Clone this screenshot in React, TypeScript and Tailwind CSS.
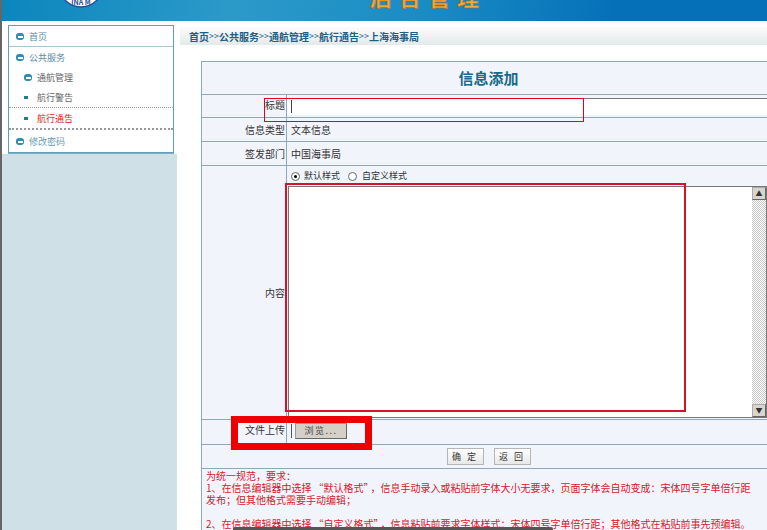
import React from 'react';

const cjk = "font-['Noto_Sans_CJK_SC',sans-serif]";

const NavDot = () => (
  <span className="flex h-[7px] w-[8px] shrink-0 items-center justify-center rounded-[3px] bg-[#2f8db5]">
    <span className="block h-[2px] w-[5px] bg-white" />
  </span>
);

const Bullet = () => <span className="mr-[9px] h-[3px] w-[4px] bg-[#1f7f86]" />;

const Sidebar = () => (
  <aside className="flex w-[175px] shrink-0 flex-col">
    <div className="bg-white pb-[1px] pl-[6px] pr-[3px] pt-[4px]">
      <div className="border border-[#5f9db8] bg-white text-[9px] leading-none shadow-[0_1px_0_#7fb0c6]">
        <div className="flex h-[21px] items-center gap-[5px] border-b border-[#a9c4d2] pl-[7px] pt-[1px] text-[#5a8aa5]">
          <NavDot /> 首页
        </div>
        <div className="flex h-[20px] items-center gap-[5px] pl-[7px] pt-[1px] text-[#5a8aa5]">
          <NavDot /> 公共服务
        </div>
        <div className="flex h-[20px] items-center gap-[5px] pl-[15px] pt-[1px] text-[#666]">
          <NavDot /> 通航管理
        </div>
        <div className="flex h-[21px] items-center border-b border-dotted border-[#999] pl-[15px] pt-[1px] text-[#666]">
          <Bullet /> 航行警告
        </div>
        <div className="flex h-[22px] items-center border-b-2 border-dotted border-[#999] pl-[15px] pt-[1px] text-[#e01b1b]">
          <Bullet /> 航行通告
        </div>
        <div className="flex h-[22px] items-center gap-[5px] pl-[7px] pt-[1px] text-[#6a9ab3]">
          <NavDot /> 修改密码
        </div>
      </div>
    </div>
    <div className="flex-1 bg-[#cfe0e7]" />
  </aside>
);

const Row = ({ label, h, top, children }: { label: string; h: string; top?: boolean; children?: React.ReactNode }) => (
  <div className={`flex border-b border-[#8fa8bb] ${h}`}>
    <div className={`flex w-[85px] shrink-0 justify-end border-r border-[#8fa8bb] pr-[1px] text-[#333] ${top ? 'items-start pt-[2px]' : 'items-center'}`}>
      {label}
    </div>
    <div className="flex min-w-0 flex-1 items-center pl-[4px] text-[#333]">{children}</div>
  </div>
);

const Radio = ({ checked }: { checked?: boolean }) => (
  <span className="flex h-[9px] w-[9px] shrink-0 items-center justify-center rounded-full border border-[#666] bg-white">
    {checked && <span className="h-[3px] w-[3px] rounded-full bg-black" />}
  </span>
);

const Quote = ({ children }: { children: React.ReactNode }) => <span className="px-[2px]">{children}</span>;

const Sep = () => <span className="text-[9px] font-normal">&gt;&gt;</span>;

export default function App() {
  return (
    <div className={`relative flex h-[530px] w-[767px] overflow-hidden bg-white text-[10px] ${cjk}`}>
      <div className="w-[2px] shrink-0 bg-[#666]" />
      <div className="flex min-w-0 flex-1 flex-col">
        <header className="relative h-[21px] shrink-0 overflow-hidden bg-[linear-gradient(100deg,#0b86bd_0%,#2c9ac9_30%,#1a8cc4_55%,#0570b8_80%,#0570b8_100%)] pl-[368px]">
          <svg className="absolute left-[56px] top-[-38px] h-[46px] w-[46px]" viewBox="0 0 46 46">
            <circle cx="23" cy="23" r="22" fill="#fff" stroke="#2a4f9c" strokeWidth="1.5" />
            <text x="23" y="43" textAnchor="middle" fontSize="7" fontWeight="700" fill="#2a4f9c">INA M</text>
          </svg>
          <span className="mt-[-19px] block text-[22px] font-bold leading-[30px] tracking-[7px] text-[#f2a93b] [-webkit-text-stroke:0.5px_#a8621a]">后台管理</span>
        </header>
        <div className="flex min-h-0 flex-1">
          <Sidebar />
          <main className="min-w-0 flex-1 pt-[6px]">
            <div className="ml-[3px] flex h-[18px] items-center bg-[linear-gradient(#fbfbfa,#e3eaea)] pl-[9px] text-[10px] font-bold text-[#1d5f86]">
              首页<Sep />公共服务<Sep />通航管理<Sep />航行通告<Sep />上海海事局
            </div>
            <div className="ml-[24px] mt-[16px] w-[574px] border-l border-t border-[#8fa8bb] bg-[#f2f4fc]">
              <div className="flex h-[33px] items-center justify-center border-b border-[#8fa8bb] text-[15px] font-bold text-[#176b8a]">信息添加</div>
              <Row label="标题" h="h-[23px]" top>
                <div className="ml-[-4px] mt-[3px] h-[17px] w-[calc(100%+4px)] self-start border-t border-[#777] bg-white pl-[4px] pt-[1px]">
                  <div className="h-[13px] w-px bg-[#444]" />
                </div>
              </Row>
              <Row label="信息类型" h="h-[24px]">文本信息</Row>
              <Row label="签发部门" h="h-[24px]">中国海事局</Row>
              <Row label="内容" h="h-[254px]">
                <div className="flex h-full w-full flex-col">
                  <div className="flex h-[20px] items-center text-[9px]">
                    <Radio checked />
                    <span className="ml-[4px] mr-[8px]">默认样式</span>
                    <Radio />
                    <span className="ml-[5px]">自定义样式</span>
                  </div>
                  <div className="ml-[-3px] mb-[1px] flex w-[479px] flex-1 border border-[#777] bg-white">
                    <div className="flex-1" />
                    <div className="flex w-[14px] flex-col bg-[repeating-conic-gradient(#c8c8c8_0_25%,#fff_0_50%)] bg-[length:2px_2px]">
                      <div className="flex h-[13px] items-center justify-center border border-[#aaa] border-b-[#666] border-r-[#666] bg-[#d8d5cc] text-[7px] leading-none text-[#333]">▲</div>
                      <div className="flex-1" />
                      <div className="flex h-[13px] items-center justify-center border border-[#aaa] border-b-[#666] border-r-[#666] bg-[#d8d5cc] text-[7px] leading-none text-[#333]">▼</div>
                    </div>
                  </div>
                </div>
              </Row>
              <Row label="文件上传" h="h-[25px]" top>
                <div className="mb-[3px] flex h-[14px] items-center border-l border-[#555] pl-[3px]">
                  <button className="h-[16px] w-[52px] border border-[#999] border-b-[#666] border-r-[#666] bg-[#d4d0c8] text-[9px] tracking-[1.5px] text-[#444]">浏览...</button>
                </div>
              </Row>
              <div className="flex h-[24px] items-center justify-center gap-[10px] border-b border-[#8fa8bb]">
                <button className="h-[17px] w-[37px] border border-[#b5b5b5] bg-[linear-gradient(#fff,#e8e8e8)] text-[9px] tracking-[2px] text-[#333]">确 定</button>
                <button className="h-[17px] w-[37px] border border-[#b5b5b5] bg-[linear-gradient(#fff,#e8e8e8)] text-[9px] tracking-[2px] text-[#333]">返 回</button>
              </div>
              <div className="pl-[4px] pt-[1px] text-[10px] leading-[12px] text-[#d8182a]">
                <p>为统一规范，要求：</p>
                <p>
                  1、在信息编辑器中选择<Quote>“默认格式”</Quote>，信息手动录入或粘贴前字体大小无要求，页面字体会自动变成：宋体四号字单倍行距
                  <br />
                  发布；但其他格式需要手动编辑；
                </p>
                <p className="mt-[12px] whitespace-nowrap">
                  2、在信息编辑器中选择<Quote>“自定义格式”</Quote>，信息粘贴前要求字体样式：宋体四号字单倍行距；其他格式在粘贴前事先预编辑。
                </p>
              </div>
            </div>
          </main>
        </div>
      </div>
      {/* annotations drawn over the screenshot */}
      <div className="absolute left-[264px] top-[98px] h-[24px] w-[320px] border border-[#e00020]" />
      <div className="absolute left-[285px] top-[183px] h-[229px] w-[401px] border-2 border-[#d8102a]" />
      <div className="absolute left-[231px] top-[416px] h-[34px] w-[141px] border-[7px] border-[#ee0000]" />
      <div className="absolute bottom-0 left-[233px] h-[3px] w-[320px] rounded-t-[2px] bg-[#555]" />
    </div>
  );
}
